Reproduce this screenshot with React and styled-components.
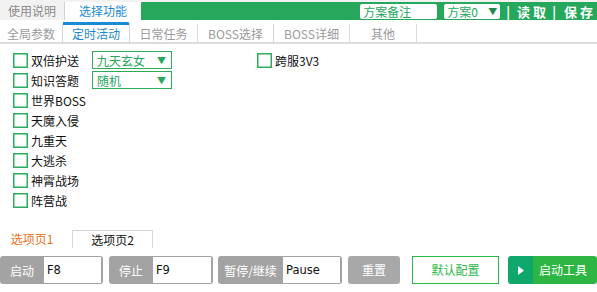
import styled, { createGlobalStyle } from "styled-components";

const Global = createGlobalStyle`
  body {
    margin: 0;
    background: #fff;
    font-family: "Microsoft YaHei", "Noto Sans CJK SC", "Noto Sans", sans-serif;
    font-size: 12px;
  }
`;

const Page = styled.div`
  width: 597px;
  height: 292px;
  display: flex;
  flex-direction: column;
  overflow: hidden;
  white-space: nowrap;
`;

const TopRow = styled.div`
  display: flex;
  height: 20px;
  background: #f2f2f2;
  padding-top: 2px;
  box-sizing: border-box;
`;

const TopTab = styled.div`
  width: ${({ w }) => w}px;
  height: 18px;
  line-height: 18px;
  text-align: center;
  font-size: 12px;
  color: ${({ active }) => (active ? "#1a8ad4" : "#8a8a8a")};
  background: ${({ active }) => (active ? "#fff" : "transparent")};
  border-right: ${({ active }) => (active ? "none" : "1px solid #d0d0d0")};
`;

const GreenBar = styled.div`
  flex: 1;
  height: 18px;
  background: #25a85c;
  display: flex;
  align-items: center;
  justify-content: flex-end;
  padding-right: 1px;
`;

const Note = styled.div`
  width: 77px;
  height: 15px;
  background: #fff;
  border-radius: 2px;
  color: #25a85c;
  line-height: 15px;
  padding-left: 3px;
  box-sizing: border-box;
  margin-right: 7px;
`;

const PlanSelect = styled.div`
  width: 56px;
  height: 15px;
  background: #fff;
  border-radius: 2px;
  color: #25a85c;
  line-height: 15px;
  padding: 0 3px;
  box-sizing: border-box;
  display: flex;
  justify-content: space-between;
  font-size: 12px;
`;

const Arrow = styled.span`
  font-size: 9px;
  color: ${({ color }) => color || "#1e8a4a"};
`;

const BarText = styled.span`
  color: #fff;
  font-weight: bold;
  font-size: 13px;
  letter-spacing: ${({ gap }) => gap || 2}px;
  margin-left: ${({ ml }) => ml || 0}px;
`;

const SubRow = styled.div`
  display: flex;
  height: 24px;
  border-bottom: 2px solid #dcdcdc;
  box-sizing: border-box;
`;

const SubTab = styled.div`
  width: ${({ w }) => w}px;
  height: 20px;
  line-height: 18px;
  box-sizing: border-box;
  text-align: center;
  font-size: 12px;
  color: ${({ active }) => (active ? "#1a8ad4" : "#9a9a9a")};
  border-right: 1px solid #dadada;
  border-top: 3px solid ${({ active }) => (active ? "#1a8ad4" : "transparent")};
  margin-top: 2px;
  border-top-right-radius: 3px;
`;

const Content = styled.div`
  height: 184px;
  display: flex;
  padding: 6px 0 0 13px;
  box-sizing: border-box;
`;

const Column = styled.div`
  display: flex;
  flex-direction: column;
  width: ${({ w }) => w}px;
`;

const Row = styled.div`
  display: flex;
  align-items: center;
  height: 20px;
`;

const Box = styled.div`
  width: 13px;
  height: 13px;
  border: 1px solid #2aad5c;
  box-shadow: inset 0 0 0 0.5px #2aad5c;
  margin-right: 3px;
  flex-shrink: 0;
`;

const Label = styled.span`
  color: #111;
  font-size: 12px;
  flex-shrink: 0;
  width: ${({ w }) => (w ? `${w}px` : "auto")};
`;

const Dropdown = styled.div`
  width: 80px;
  height: 18px;
  border: 1px solid #2daa5a;
  box-sizing: border-box;
  display: flex;
  align-items: center;
  justify-content: space-between;
  padding: 0 5px 0 4px;
  color: #25a85c;
  font-size: 12px;
  margin-left: 13px;
`;

const PageTabs = styled.div`
  display: flex;
  height: 18px;
  margin-top: 2px;
`;

const PageTab = styled.div`
  width: ${({ w }) => w}px;
  text-align: center;
  line-height: 17px;
  font-size: 12px;
  color: ${({ active }) => (active ? "#e8701a" : "#111")};
  border: ${({ active }) => (active ? "none" : "1px solid #d6d6d6")};
  border-bottom: none;
  box-sizing: border-box;
  margin-left: ${({ ml }) => ml || 0}px;
`;

const Footer = styled.div`
  display: flex;
  align-items: center;
  height: 28px;
  margin-top: 8px;
`;

const KeyGroup = styled.div`
  display: flex;
  align-items: center;
  height: 28px;
  background: #a3a3a3;
  border-radius: 3px;
  padding: 1px 2px 1px 0;
  box-sizing: border-box;
  margin-left: ${({ ml }) => ml || 0}px;
`;

const KeyLabel = styled.span`
  color: #fff;
  font-size: 12px;
  width: ${({ w }) => w}px;
  text-align: center;
`;

const KeyInput = styled.div`
  width: ${({ w }) => w}px;
  height: 26px;
  background: #fff;
  line-height: 26px;
  padding-left: 3px;
  box-sizing: border-box;
  font-family: "DejaVu Sans", sans-serif;
  font-size: 11.5px;
  color: #111;
`;

const GrayButton = styled.div`
  width: 52px;
  height: 28px;
  line-height: 28px;
  background: #a8a8a8;
  border-radius: 3px;
  color: #fff;
  text-align: center;
  font-size: 12px;
  margin-left: 6px;
`;

const OutlineButton = styled.div`
  width: 87px;
  height: 28px;
  line-height: 26px;
  border: 1px solid #2db84d;
  box-sizing: border-box;
  color: #2db84d;
  text-align: center;
  font-size: 12px;
  margin-left: 12px;
`;

const StartButton = styled.div`
  display: flex;
  width: 89px;
  height: 28px;
  border-radius: 3px;
  overflow: hidden;
  margin-left: 9px;
`;

const StartIcon = styled.div`
  width: 25px;
  background: #10a86a;
  display: flex;
  align-items: center;
  justify-content: center;
`;

const StartText = styled.div`
  flex: 1;
  background: #2db643;
  color: #fff;
  text-align: center;
  line-height: 28px;
  font-size: 12px;
  padding-right: 4px;
`;

const leftItems = ["双倍护送", "知识答题", "世界BOSS", "天魔入侵", "九重天", "大逃杀", "神霄战场", "阵营战"];

export default function App() {
  return (
    <Page>
      <Global />
      <TopRow>
        <TopTab w={64}>使用说明</TopTab>
        <TopTab w={76} active>选择功能</TopTab>
        <GreenBar>
          <Note>方案备注</Note>
          <PlanSelect>
            方案0 <Arrow>▼</Arrow>
          </PlanSelect>
          <BarText ml={6} gap={0}>|</BarText>
          <BarText ml={5} gap={3}>读取</BarText>
          <BarText ml={3} gap={0}>|</BarText>
          <BarText ml={6} gap={3}>保存</BarText>
        </GreenBar>
      </TopRow>
      <SubRow>
        <SubTab w={63}>全局参数</SubTab>
        <SubTab w={67} active>定时活动</SubTab>
        <SubTab w={68}>日常任务</SubTab>
        <SubTab w={76}>BOSS选择</SubTab>
        <SubTab w={76}>BOSS详细</SubTab>
        <SubTab w={67}>其他</SubTab>
      </SubRow>
      <Content>
        <Column w={244}>
          {leftItems.map((name, i) => (
            <Row key={name}>
              <Box />
              <Label w={i < 2 ? 48 : 0}>{name}</Label>
              {i === 0 && (
                <Dropdown>
                  九天玄女 <Arrow color="#25a85c">▼</Arrow>
                </Dropdown>
              )}
              {i === 1 && (
                <Dropdown>
                  随机 <Arrow color="#25a85c">▼</Arrow>
                </Dropdown>
              )}
            </Row>
          ))}
        </Column>
        <Column w={120}>
          <Row>
            <Box />
            <Label>跨服3V3</Label>
          </Row>
        </Column>
      </Content>
      <PageTabs>
        <PageTab w={64} active>选项页1</PageTab>
        <PageTab w={81} ml={8}>选项页2</PageTab>
      </PageTabs>
      <Footer>
        <KeyGroup>
          <KeyLabel w={44}>启动</KeyLabel>
          <KeyInput w={57}>F8</KeyInput>
        </KeyGroup>
        <KeyGroup ml={6}>
          <KeyLabel w={44}>停止</KeyLabel>
          <KeyInput w={58}>F9</KeyInput>
        </KeyGroup>
        <KeyGroup ml={5}>
          <KeyLabel w={65}>暂停/继续</KeyLabel>
          <KeyInput w={57}>Pause</KeyInput>
        </KeyGroup>
        <GrayButton>重置</GrayButton>
        <OutlineButton>默认配置</OutlineButton>
        <StartButton>
          <StartIcon>
            <svg width="6" height="9" viewBox="0 0 6 9">
              <path d="M0 0 L6 4.5 L0 9 Z" fill="#fff" />
            </svg>
          </StartIcon>
          <StartText>启动工具</StartText>
        </StartButton>
      </Footer>
    </Page>
  );
}
